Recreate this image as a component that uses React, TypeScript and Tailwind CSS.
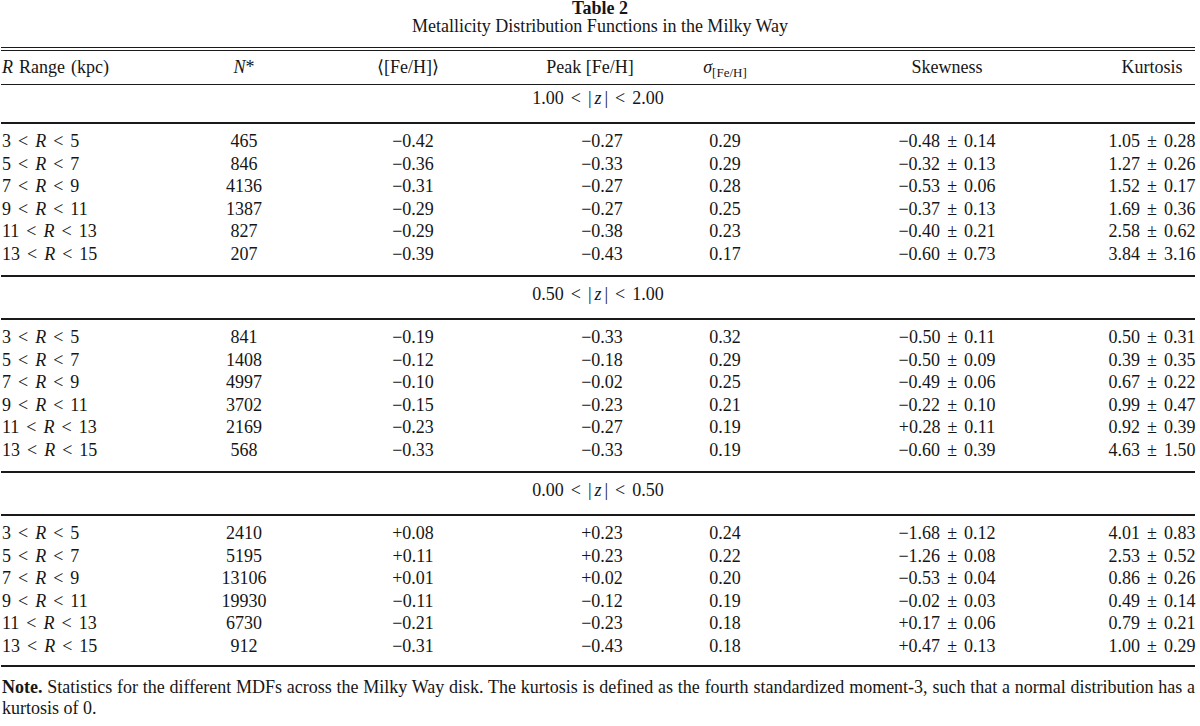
import React from "react";

type Row = [string, string, string, string, string, string, string, string, string, string];

const sections: { lo: string; hi: string; rows: Row[]; pt: string; pb: string }[] = [
  {
    lo: "1.00",
    hi: "2.00",
    pt: "pt-[6px]",
    pb: "pb-[10px]",
    rows: [
      ["3", "5", "465", "−0.42", "−0.27", "0.29", "−0.48", "0.14", "1.05", "0.28"],
      ["5", "7", "846", "−0.36", "−0.33", "0.29", "−0.32", "0.13", "1.27", "0.26"],
      ["7", "9", "4136", "−0.31", "−0.27", "0.28", "−0.53", "0.06", "1.52", "0.17"],
      ["9", "11", "1387", "−0.29", "−0.27", "0.25", "−0.37", "0.13", "1.69", "0.36"],
      ["11", "13", "827", "−0.29", "−0.38", "0.23", "−0.40", "0.21", "2.58", "0.62"],
      ["13", "15", "207", "−0.39", "−0.43", "0.17", "−0.60", "0.73", "3.84", "3.16"],
    ],
  },
  {
    lo: "0.50",
    hi: "1.00",
    pt: "pt-[6px]",
    pb: "pb-[10px]",
    rows: [
      ["3", "5", "841", "−0.19", "−0.33", "0.32", "−0.50", "0.11", "0.50", "0.31"],
      ["5", "7", "1408", "−0.12", "−0.18", "0.29", "−0.50", "0.09", "0.39", "0.35"],
      ["7", "9", "4997", "−0.10", "−0.02", "0.25", "−0.49", "0.06", "0.67", "0.22"],
      ["9", "11", "3702", "−0.15", "−0.23", "0.21", "−0.22", "0.10", "0.99", "0.47"],
      ["11", "13", "2169", "−0.23", "−0.27", "0.19", "+0.28", "0.11", "0.92", "0.39"],
      ["13", "15", "568", "−0.33", "−0.33", "0.19", "−0.60", "0.39", "4.63", "1.50"],
    ],
  },
  {
    lo: "0.00",
    hi: "0.50",
    pt: "pt-[6px]",
    pb: "pb-[8px]",
    rows: [
      ["3", "5", "2410", "+0.08", "+0.23", "0.24", "−1.68", "0.12", "4.01", "0.83"],
      ["5", "7", "5195", "+0.11", "+0.23", "0.22", "−1.26", "0.08", "2.53", "0.52"],
      ["7", "9", "13106", "+0.01", "+0.02", "0.20", "−0.53", "0.04", "0.86", "0.26"],
      ["9", "11", "19930", "−0.11", "−0.12", "0.19", "−0.02", "0.03", "0.49", "0.14"],
      ["11", "13", "6730", "−0.21", "−0.23", "0.18", "+0.17", "0.06", "0.79", "0.21"],
      ["13", "15", "912", "−0.31", "−0.43", "0.18", "+0.47", "0.13", "1.00", "0.29"],
    ],
  },
];

// header cells: width/margin classes so each column heading sits at its x in the reference
const headCols = [
  "w-[200px] justify-start pl-[1px]",
  "w-[86px] justify-center",
  "w-[100px] ml-[71px] justify-center",
  "w-[110px] ml-[77px] justify-center",
  "w-[60px] ml-[50px] justify-center",
  "w-[140px] ml-[122px] justify-center",
  "w-[86px] ml-[92px] justify-center",
];

// data cells: numbers sit slightly right of their headings in the mean and peak columns
const dataCols = [
  "w-[200px] justify-start pl-[1px]",
  "w-[86px] justify-center",
  "w-[100px] ml-[76px] justify-center",
  "w-[110px] ml-[84px] justify-center",
  "w-[60px] ml-[38px] justify-center",
  "w-[140px] ml-[122px] justify-center",
  "w-[86px] ml-[92px] justify-center",
];

function Lt() {
  return <span className="mx-[7px]">&lt;</span>;
}

function Pm({ a, b }: { a: string; b: string }) {
  return (
    <span>
      {a}
      <span className="mx-[7px]">±</span>
      {b}
    </span>
  );
}

function Cell({ c, children }: { c: string; children: React.ReactNode }) {
  return <div className={`${c} shrink-0 whitespace-nowrap flex`}>{children}</div>;
}

export default function App() {
  return (
    <div className="w-[1200px] h-[726px] bg-white text-[#161616] font-['Liberation_Serif','DejaVu_Serif',serif] text-[18px] overflow-hidden">
      <div className="text-center font-bold leading-[16px]">Table 2</div>
      <div className="text-center leading-[20px]">Metallicity Distribution Functions in the Milky Way</div>

      <div className="ml-[1px] w-[1194px]">
        <div className="mt-[11px] h-[4px] border-y border-[#1a1a1a]" />

        {/* header row */}
        <div className="flex leading-[22px] pt-[5px] pb-[4px] border-b border-[#1a1a1a]">
          <Cell c={headCols[0]}>
            <span>
              <i>R</i>
              <span className="ml-[6px]">Range</span>
              <span className="ml-[6px]">(kpc)</span>
            </span>
          </Cell>
          <Cell c={headCols[1]}>
            <span>
              <i>N</i>*
            </span>
          </Cell>
          <Cell c={headCols[2]}>⟨[Fe/H]⟩</Cell>
          <Cell c={headCols[3]}>Peak [Fe/H]</Cell>
          <Cell c={headCols[4]}>
            <span>
              <i>σ</i>
              <span className="text-[13px] relative top-[4px]">[Fe/H]</span>
            </span>
          </Cell>
          <Cell c={headCols[5]}>Skewness</Cell>
          <Cell c={headCols[6]}>Kurtosis</Cell>
        </div>

        {sections.map((s, si) => (
          <div key={si}>
            <div
              className={`text-center leading-[22px] border-b-2 border-[#1a1a1a] ${
                si === 0 ? "pt-[2px] pb-[13px]" : "pt-[6px] pb-[13px]"
              }`}
            >
              {s.lo}
              <Lt />
              <span>
                |<i className="mx-[3px]">z</i>|
              </span>
              <Lt />
              {s.hi}
            </div>
            <div className={`${s.pt} ${s.pb} border-b-2 border-[#1a1a1a]`}>
              {s.rows.map((r, ri) => (
                <div key={ri} className="flex leading-[22.5px]">
                  <Cell c={dataCols[0]}>
                    <span>
                      {r[0]}
                      <Lt />
                      <i>R</i>
                      <Lt />
                      {r[1]}
                    </span>
                  </Cell>
                  <Cell c={dataCols[1]}>{r[2]}</Cell>
                  <Cell c={dataCols[2]}>{r[3]}</Cell>
                  <Cell c={dataCols[3]}>{r[4]}</Cell>
                  <Cell c={dataCols[4]}>{r[5]}</Cell>
                  <Cell c={dataCols[5]}>
                    <Pm a={r[6]} b={r[7]} />
                  </Cell>
                  <Cell c={dataCols[6]}>
                    <Pm a={r[8]} b={r[9]} />
                  </Cell>
                </div>
              ))}
            </div>
          </div>
        ))}

        <p className="mt-[10px] leading-[21px] text-justify pl-[1px]">
          <b>Note.</b> Statistics for the different MDFs across the Milky Way disk. The kurtosis is defined as the
          fourth standardized moment-3, such that a normal distribution has a kurtosis of 0.
        </p>
      </div>
    </div>
  );
}
